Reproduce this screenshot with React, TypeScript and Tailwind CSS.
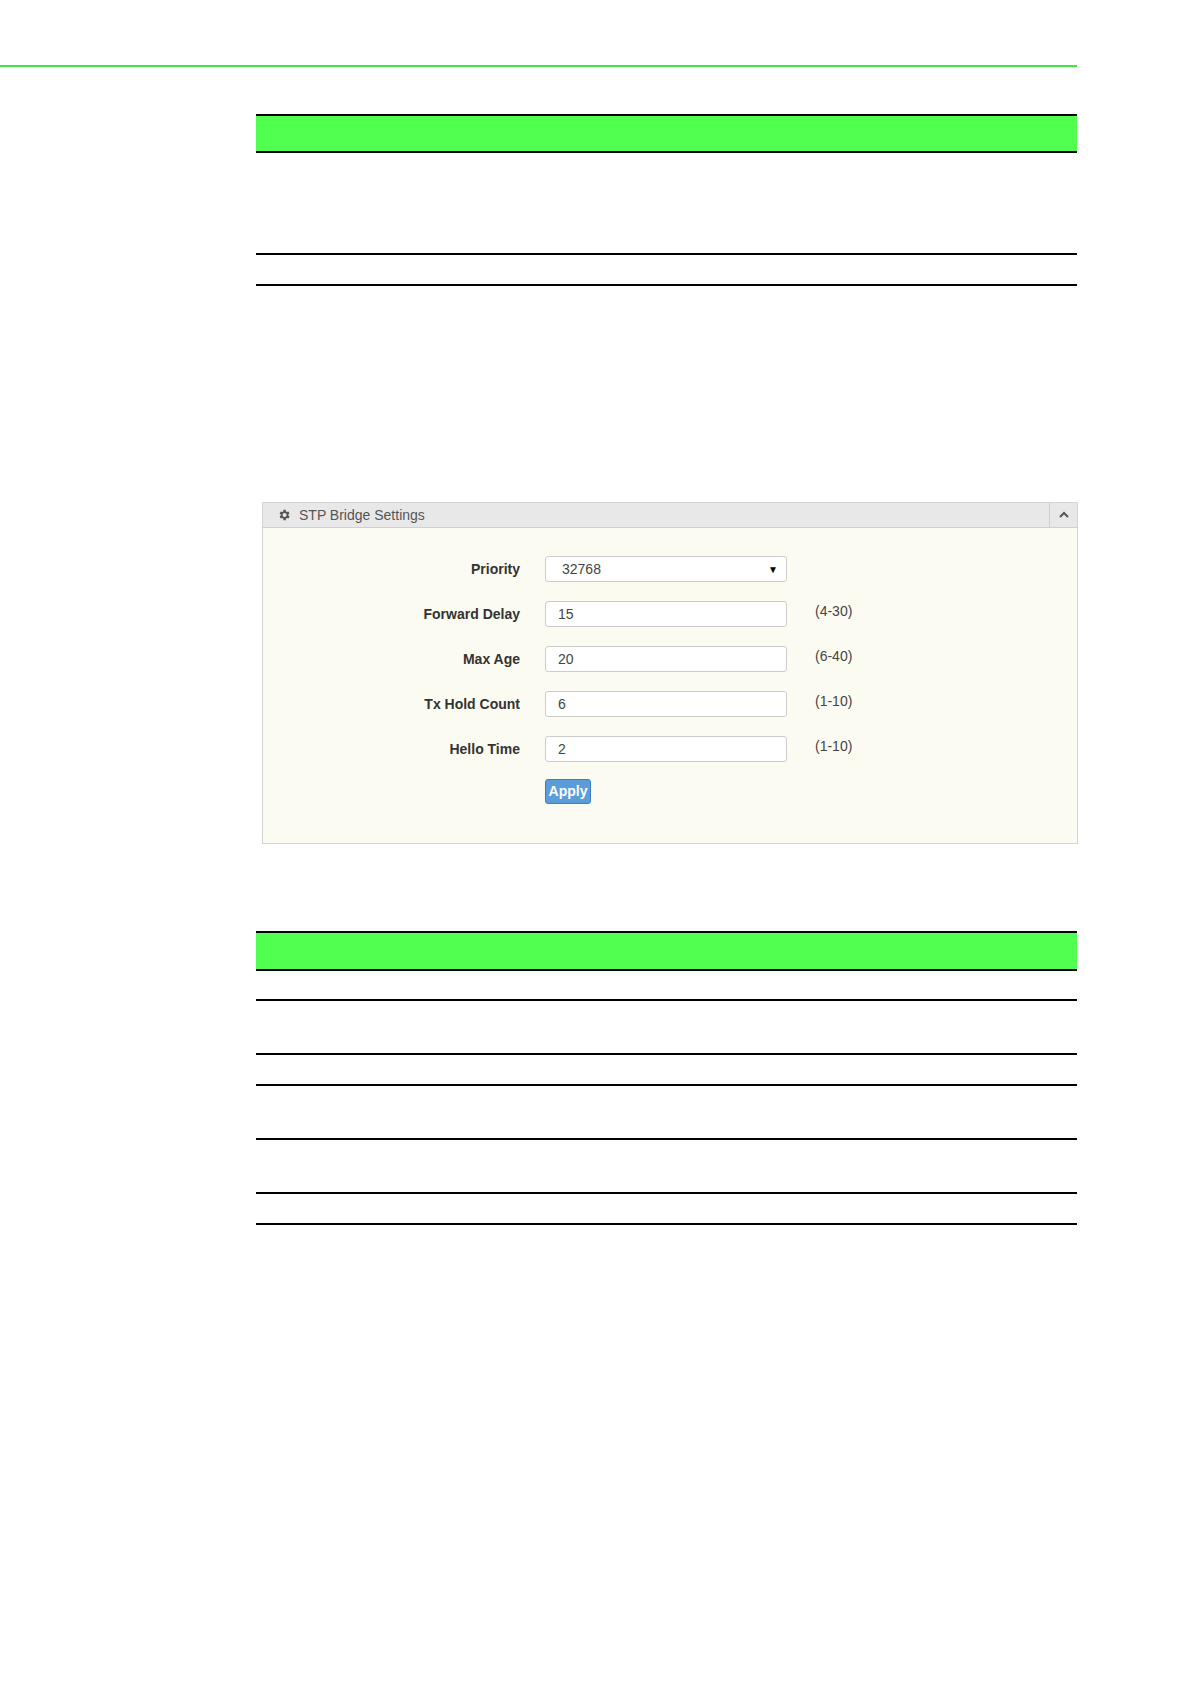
import React from "react";

const rows = [
  { label: "Forward Delay", value: "15", range: "(4-30)" },
  { label: "Max Age", value: "20", range: "(6-40)" },
  { label: "Tx Hold Count", value: "6", range: "(1-10)" },
  { label: "Hello Time", value: "2", range: "(1-10)" },
];

export default function App() {
  return (
    <div className="relative w-[1190px] h-[1684px] bg-white" style={{ fontFamily: '"Liberation Sans", Arial, sans-serif' }}>
      <div className="pt-[65px]">
        <div className="w-[1077px] h-[2px] bg-[#3ee83e]" />
      </div>
      <div className="ml-[256px] w-[821px]">
        <div className="mt-[47px] h-[39px] bg-[#50ff50] border-t-2 border-b-2 border-black" />
        <div className="h-[102px] border-b-2 border-black" />
        <div className="h-[31px] border-b-2 border-black" />
      </div>
      <div className="ml-[262px] mt-[216px] w-[816px] h-[342px] border border-[#d4d4d4] bg-[#fcfbf1] flex flex-col">
        <div className="h-[25px] bg-[#e8e8e8] border-b border-[#d0d0d0] flex items-center text-[14px] text-[#555]">
          <svg className="ml-[14px] mr-[8px]" width="14" height="14" viewBox="0 0 24 24" fill="#555">
            <path d="M19.4 13a7.5 7.5 0 0 0 0-2l2.1-1.6-2-3.5-2.5 1a7.6 7.6 0 0 0-1.7-1L15 3h-4l-.4 2.9a7.6 7.6 0 0 0-1.7 1l-2.5-1-2 3.5L6.6 11a7.5 7.5 0 0 0 0 2l-2.1 1.6 2 3.5 2.5-1c.5.4 1.1.7 1.7 1L11 21h4l.4-2.9c.6-.3 1.2-.6 1.7-1l2.5 1 2-3.5zM13 15.5a3.5 3.5 0 1 1 0-7 3.5 3.5 0 0 1 0 7z" />
          </svg>
          <span>STP Bridge Settings</span>
          <div className="ml-auto w-[28px] h-full border-l border-[#d0d0d0] flex items-center justify-center">
            <svg width="10" height="8" viewBox="0 0 10 8"><path d="M1 6l4-4 4 4" stroke="#555" strokeWidth="2" fill="none" /></svg>
          </div>
        </div>
        <div className="pt-[28px] flex flex-col gap-[19px]">
          <div className="flex items-center h-[26px]">
            <div className="w-[257px] text-right text-[14px] font-bold text-[#333]">Priority</div>
            <div className="ml-[25px] w-[242px] h-[26px] border border-[#ccc] rounded-[3px] bg-white flex items-center pl-[16px] pr-[8px] text-[14px] text-[#444]">
              <span>32768</span>
              <span className="ml-auto text-[10px] text-black">▼</span>
            </div>
          </div>
          {rows.map((r) => (
            <div key={r.label} className="flex items-center h-[26px]">
              <div className="w-[257px] text-right text-[14px] font-bold text-[#333]">{r.label}</div>
              <div className="ml-[25px] w-[242px] h-[26px] border border-[#ccc] rounded-[3px] bg-white flex items-center pl-[12px] text-[14px] text-[#444]">{r.value}</div>
              <div className="ml-[28px] -mt-[6px] text-[14px] text-[#444]">{r.range}</div>
            </div>
          ))}
          <div className="ml-[282px] -mt-[2px]">
            <div className="w-[46px] h-[25px] rounded-[3px] bg-[#5b9dd9] border border-[#3f7fbf] text-white font-bold text-[14px] flex items-center justify-center">Apply</div>
          </div>
        </div>
      </div>
      <div className="ml-[256px] w-[821px] mt-[87px]">
        <div className="h-[40px] bg-[#50ff50] border-t-2 border-b-2 border-black" />
        <div className="h-[30px] border-b-2 border-black" />
        <div className="h-[54px] border-b-2 border-black" />
        <div className="h-[31px] border-b-2 border-black" />
        <div className="h-[54px] border-b-2 border-black" />
        <div className="h-[54px] border-b-2 border-black" />
        <div className="h-[31px] border-b-2 border-black" />
      </div>
    </div>
  );
}
